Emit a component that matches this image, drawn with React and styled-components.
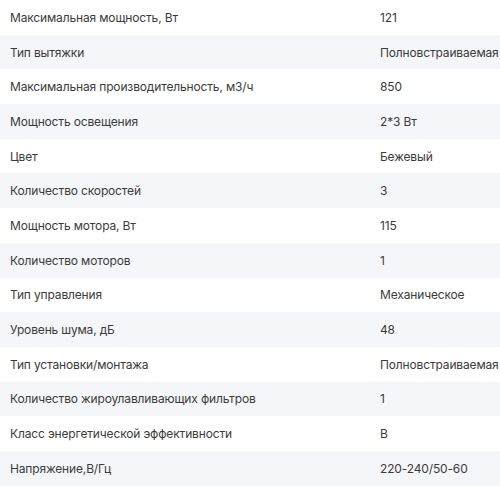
import styled, { createGlobalStyle } from 'styled-components';

const GlobalStyle = createGlobalStyle`
    body {
        margin: 0;
        background: #ffffff;
        font-family: Inter, Roboto, "Noto Sans", sans-serif;
    }
`;

const Table = styled.div`
    width: 500px;
    display: flex;
    flex-direction: column;
`;

const Row = styled.div`
    display: grid;
    grid-template-columns: 380px 1fr;
    align-items: center;
    height: 34.7px;
    background: ${props => (props.$striped ? '#f5f6fa' : '#ffffff')};
`;

const Name = styled.div`
    padding-left: 10px;
    font-size: 12px;
    letter-spacing: -0.15px;
    color: #3b3b3b;
    white-space: nowrap;
`;

const Value = styled.div`
    font-size: 12px;
    letter-spacing: -0.15px;
    color: #3b3b3b;
    white-space: nowrap;
`;

const specs = [
    ['Максимальная мощность, Вт', '121'],
    ['Тип вытяжки', 'Полновстраиваемая'],
    ['Максимальная производительность, м3/ч', '850'],
    ['Мощность освещения', '2*3 Вт'],
    ['Цвет', 'Бежевый'],
    ['Количество скоростей', '3'],
    ['Мощность мотора, Вт', '115'],
    ['Количество моторов', '1'],
    ['Тип управления', 'Механическое'],
    ['Уровень шума, дБ', '48'],
    ['Тип установки/монтажа', 'Полновстраиваемая'],
    ['Количество жироулавливающих фильтров', '1'],
    ['Класс энергетической эффективности', 'B'],
    ['Напряжение,В/Гц', '220-240/50-60'],
];

const App = () => {
    return (
        <>
            <GlobalStyle />
            <Table>
                {specs.map(([name, value], i) => (
                    <Row key={name} $striped={i % 2 === 1}>
                        <Name>{name}</Name>
                        <Value>{value}</Value>
                    </Row>
                ))}
            </Table>
        </>
    );
};

export default App;
